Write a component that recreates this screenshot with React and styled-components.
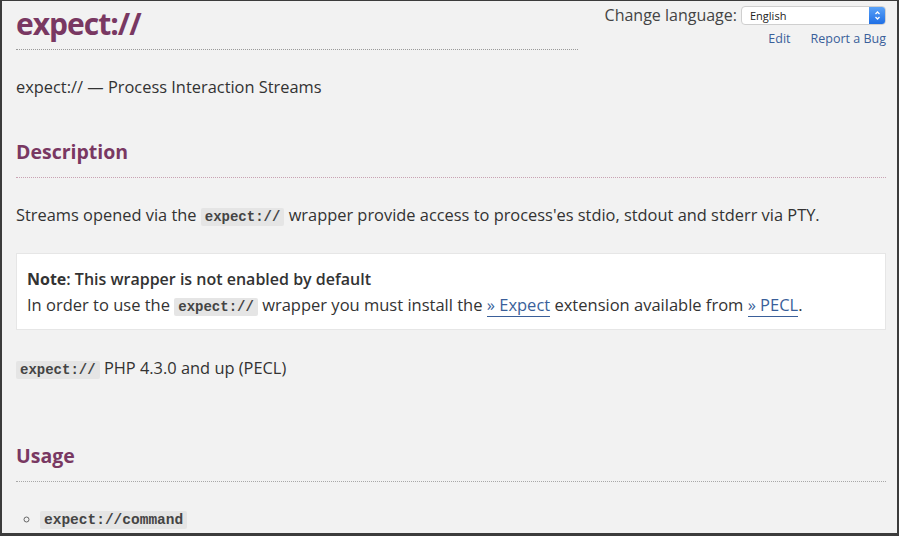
import React from 'react'
import styled, { createGlobalStyle } from 'styled-components'

const colors = {
    bg: '#f2f2f2',
    text: '#333333',
    plum: '#793862',
    link: '#3a5f9a',
    code: '#e5e5e5',
}

const GlobalStyle = createGlobalStyle`
    html, body {
        margin: 0;
        padding: 0;
        background: ${colors.bg};
    }
    body {
        font-family: "Open Sans", "Noto Sans", sans-serif;
        color: ${colors.text};
    }
`

const Frame = styled.div`
    box-sizing: border-box;
    width: 899px;
    height: 536px;
    overflow: hidden;
    background: ${colors.bg};
    border-style: solid;
    border-color: #3c3c3c;
    border-width: 1px 2px 3px 2px;
    padding: 0 11px 0 14px;
    display: flex;
    flex-direction: column;
`

const Header = styled.header`
    display: flex;
    align-items: flex-start;
`

const Title = styled.h1`
    flex: 0 0 562px;
    margin: 0;
    height: 48px;
    border-bottom: 1px dotted #9a9a9a;
    font-size: 30px;
    font-weight: 700;
    line-height: 45px;
    letter-spacing: -1px;
    color: ${colors.plum};
`

const Tools = styled.div`
    margin-left: auto;
    display: flex;
    flex-direction: column;
    align-items: flex-end;
    padding-top: 3px;
`

const LangRow = styled.div`
    display: flex;
    align-items: center;
    gap: 4px;
    font-size: 16px;
    color: #444;
`

const Select = styled.div`
    box-sizing: border-box;
    width: 145px;
    height: 19px;
    display: flex;
    align-items: center;
    background: #fff;
    border: 1px solid #cfcfcf;
    border-radius: 4px;
    overflow: hidden;
    font-size: 11px;
    color: #222;
    span {
        flex: 1;
        padding-left: 8px;
    }
`

const Stepper = styled.i`
    width: 16px;
    height: 100%;
    display: flex;
    align-items: center;
    justify-content: center;
    background: linear-gradient(#5aa2f8, #1f6fe5);
    svg {
        width: 7px;
        height: 11px;
    }
`

const ToolLinks = styled.div`
    display: flex;
    gap: 20px;
    margin-top: 4px;
    a {
        font-size: 12.5px;
        color: ${colors.link};
        text-decoration: none;
    }
`

const Lead = styled.p`
    margin: 26px 0 0;
    font-size: 16.4px;
    line-height: 22px;
`

const SectionTitle = styled.h2`
    margin: ${p => p.$gap}px 0 0;
    height: 39px;
    line-height: 28px;
    border-bottom: 1px dotted ${p => p.$line};
    font-size: 19.5px;
    font-weight: 700;
    color: ${colors.plum};
`

const Para = styled.p`
    margin: ${p => p.$gap}px 0 0;
    font-size: 16.4px;
    line-height: 22px;
`

const Code = styled.code`
    font-family: "Liberation Mono", "Courier New", monospace;
    font-weight: 700;
    font-size: ${p => p.$size || 14}px;
    color: #444;
    background: ${colors.code};
    padding: 1px 4px;
    border-radius: 2px;
`

const Note = styled.div`
    margin-top: 25px;
    padding: 12px 10px 9px;
    background: #fff;
    border: 1px solid #e6e6e6;
    font-size: 16.5px;
    line-height: 26px;
    strong {
        font-weight: 600;
        font-size: 16px;
    }
    b {
        font-weight: 700;
        font-size: 16px;
    }
`

const Ext = styled.a`
    color: ${colors.link};
    text-decoration: none;
    border-bottom: 1px solid ${colors.link};
`

const List = styled.ul`
    margin: 25px 0 0;
    padding: 0 0 0 24px;
    list-style: circle;
    font-size: 13px;
    line-height: 24px;
    li::marker {
        color: #666;
    }
`

const Arrows = () => (
    <svg viewBox="0 0 7 11" fill="none" stroke="#fff" strokeWidth="1.3">
        <path d="M1.5 4 L3.5 2 L5.5 4" />
        <path d="M1.5 7 L3.5 9 L5.5 7" />
    </svg>
)

const App = () => {
    return (
        <Frame>
            <GlobalStyle />
            <Header>
                <Title>expect://</Title>
                <Tools>
                    <LangRow>
                        Change language:
                        <Select>
                            <span>English</span>
                            <Stepper><Arrows /></Stepper>
                        </Select>
                    </LangRow>
                    <ToolLinks>
                        <a href="#edit">Edit</a>
                        <a href="#bug">Report a Bug</a>
                    </ToolLinks>
                </Tools>
            </Header>

            <Lead>expect:// — Process Interaction Streams</Lead>

            <SectionTitle $gap={40} $line="#c9a3b3">Description</SectionTitle>
            <Para $gap={26}>
                Streams opened via the <Code>expect://</Code> wrapper provide access to process'es stdio, stdout and stderr via PTY.
            </Para>

            <Note>
                <b>Note</b><strong>: This wrapper is not enabled by default</strong>
                <br />
                In order to use the <Code>expect://</Code> wrapper you must install the <Ext href="#expect">» Expect</Ext> extension available from <Ext href="#pecl">» PECL</Ext>.
            </Note>

            <Para $gap={27}>
                <Code>expect://</Code> PHP 4.3.0 and up (PECL)
            </Para>

            <SectionTitle $gap={61} $line="#a8a8a8">Usage</SectionTitle>
            <List>
                <li><Code $size={14.5}>expect://command</Code></li>
            </List>
        </Frame>
    )
}

export default App
